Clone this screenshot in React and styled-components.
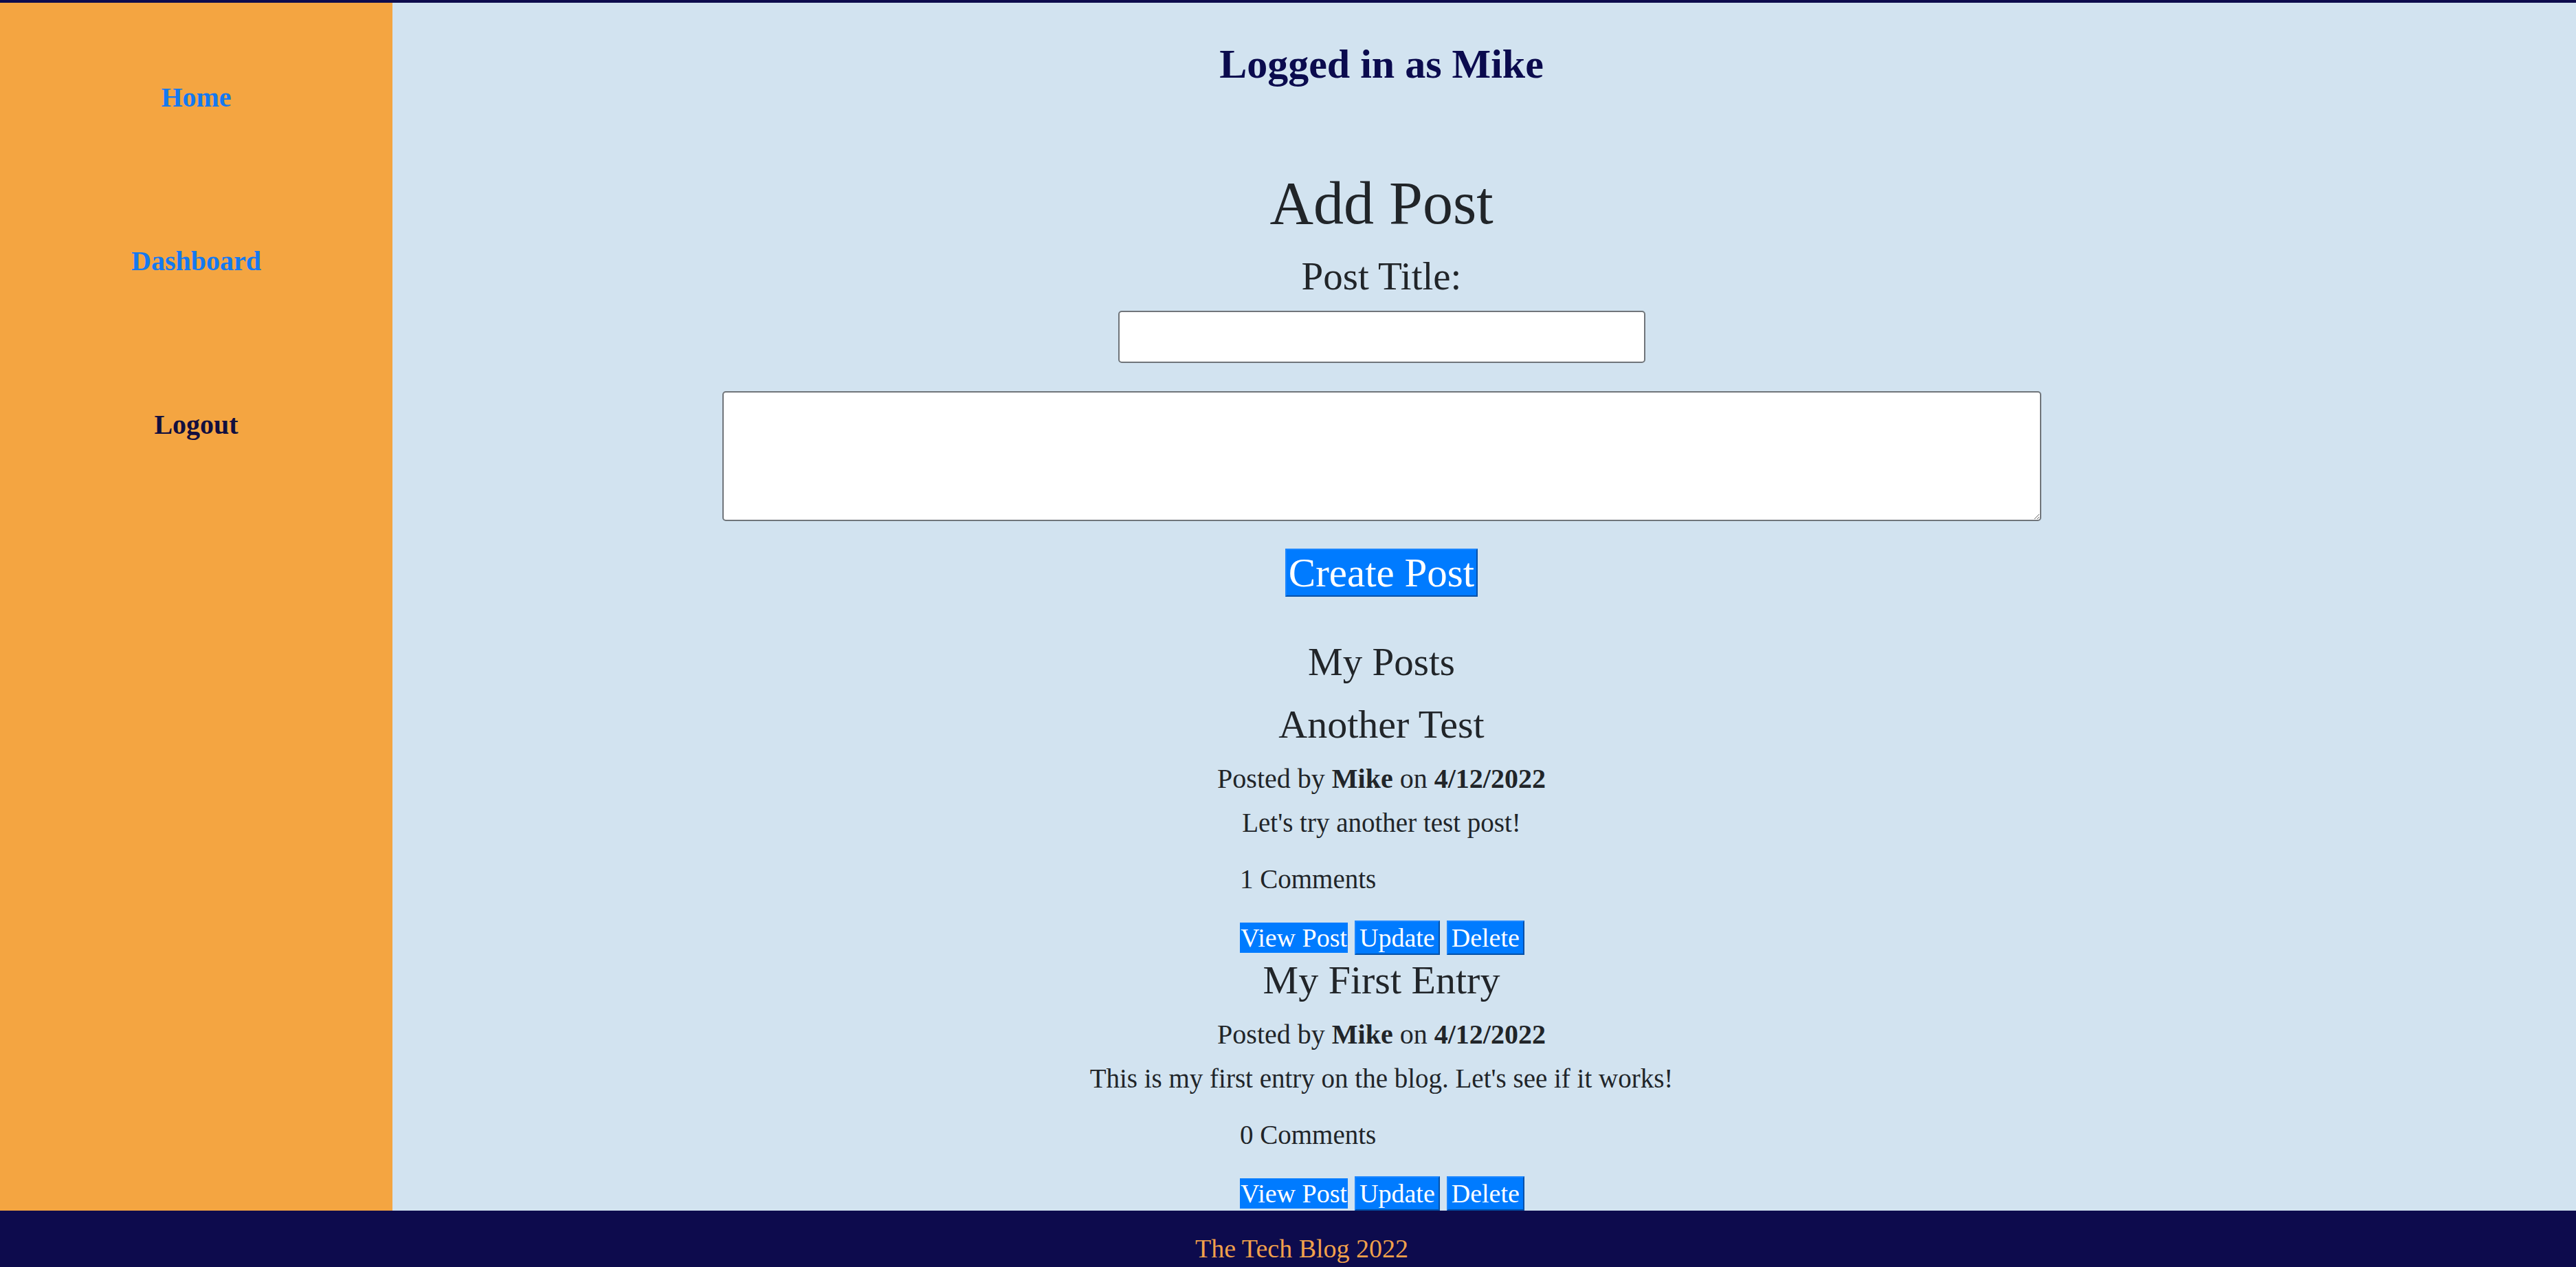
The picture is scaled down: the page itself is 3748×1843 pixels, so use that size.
import React from 'react'
import styled, { createGlobalStyle } from 'styled-components'

const GlobalStyle = createGlobalStyle`
  html, body {
    margin: 0;
    padding: 0;
  }
  body {
    font-family: "Liberation Serif", "Times New Roman", serif;
    color: #212529;
    background: #d2e3f0;
  }
`

const Page = styled.div`
  display: flex;
  flex-direction: column;
  min-height: 100vh;
  border-top: 4px solid #0d0c4d;
  box-sizing: border-box;
`

const Body = styled.div`
  display: flex;
  flex: 1;
`

const Sidebar = styled.nav`
  width: 571px;
  flex-shrink: 0;
  background: #f4a541;
  display: flex;
  flex-direction: column;
  align-items: center;
  gap: 190px;
  padding-top: 114px;
  box-sizing: border-box;
`

const NavLink = styled.a`
  font-size: 40px;
  line-height: 48px;
  font-weight: 700;
  text-decoration: none;
  color: ${p => (p.$dark ? '#120f3f' : '#1479f0')};
`

const Main = styled.main`
  flex: 1;
  display: flex;
  flex-direction: column;
  align-items: center;
  padding: 53px 299px 0 0;
`

const Greeting = styled.h4`
  margin: 0;
  font-size: 60px;
  line-height: 72px;
  font-weight: 700;
  color: #0b0b4e;
`

const Title = styled.h2`
  margin: 114px 0 0;
  font-size: 88px;
  line-height: 106px;
  font-weight: 400;
`

const Label = styled.label`
  margin-top: ${p => p.$top || 0}px;
  font-size: 57px;
  line-height: 68px;
`

const TextInput = styled.input`
  margin-top: 16px;
  width: 767px;
  height: 76px;
  box-sizing: border-box;
  background: #fff;
  border: 2px solid #70757a;
  border-radius: 5px;
  font: inherit;
  font-size: 40px;
`

const TextArea = styled.textarea`
  margin-top: 41px;
  width: 1919px;
  height: 189px;
  box-sizing: border-box;
  background: #fff;
  border: 2px solid #70757a;
  border-radius: 5px;
  font: inherit;
  font-size: 40px;
`

const Button = styled.button`
  flex-shrink: 0;
  white-space: nowrap;
  font-family: inherit;
  background: #007bff;
  color: #fff;
  border: 2px solid;
  border-color: #1c86ff #0050a8 #0050a8 #1c86ff;
  padding: 0 ${p => (p.$big ? 3 : 5)}px;
  font-size: ${p => (p.$big ? 59 : 38)}px;
  height: ${p => (p.$big ? 70 : 50)}px;
  line-height: 1;
  cursor: pointer;
`

const CreateButton = styled(Button)`
  margin-top: 40px;
`

const Post = styled.section`
  display: flex;
  flex-direction: column;
  align-items: center;
  margin-top: ${p => p.$top}px;
`

const PostTitle = styled.h4`
  margin: 0;
  font-size: 58px;
  line-height: 70px;
  font-weight: 400;
`

const Meta = styled.p`
  margin: 20px 0 0;
  font-size: 40px;
  line-height: 48px;
`

const Content = styled.p`
  margin: 16px 0 0;
  font-size: 39px;
  line-height: 48px;
`

const Footnote = styled.div`
  width: 412px;
  margin-top: 34px;
`

const Comments = styled.p`
  margin: 0;
  font-size: 39px;
  line-height: 48px;
`

const Actions = styled.div`
  display: flex;
  align-items: center;
  gap: 10px;
  margin-top: 36px;
`

const ViewLink = styled.a`
  flex-shrink: 0;
  white-space: nowrap;
  background: #007bff;
  color: #fff;
  font-size: 38px;
  line-height: 44px;
  height: 44px;
  padding: 0 1px;
  text-decoration: none;
`

const Footer = styled.footer`
  height: 84px;
  background: #0d0b4d;
  color: #f0a04b;
  display: flex;
  align-items: center;
  justify-content: center;
  padding: 26px 0 0 40px;
  box-sizing: border-box;
  font-size: 38px;
`

const posts = [
  { title: 'Another Test', body: "Let's try another test post!", comments: 1, top: 22 },
  { title: 'My First Entry', body: "This is my first entry on the blog. Let's see if it works!", comments: 0, top: 2 },
]

export default function App() {
  return (
    <>
      <GlobalStyle />
      <Page>
        <Body>
          <Sidebar>
            <NavLink href="#">Home</NavLink>
            <NavLink href="#">Dashboard</NavLink>
            <NavLink href="#" $dark>Logout</NavLink>
          </Sidebar>
          <Main>
            <Greeting>Logged in as Mike</Greeting>
            <Title>Add Post</Title>
            <Label $top={19}>Post Title:</Label>
            <TextInput type="text" />
            <TextArea />
            <CreateButton $big>Create Post</CreateButton>
            <Label $top={61}>My Posts</Label>
            {posts.map(post => (
              <Post key={post.title} $top={post.top}>
                <PostTitle>{post.title}</PostTitle>
                <Meta>Posted by <b>Mike</b> on <b>4/12/2022</b></Meta>
                <Content>{post.body}</Content>
                <Footnote>
                  <Comments>{post.comments} Comments</Comments>
                  <Actions>
                    <ViewLink href="#">View Post</ViewLink>
                    <Button>Update</Button>
                    <Button>Delete</Button>
                  </Actions>
                </Footnote>
              </Post>
            ))}
          </Main>
        </Body>
        <Footer>The Tech Blog 2022</Footer>
      </Page>
    </>
  )
}
